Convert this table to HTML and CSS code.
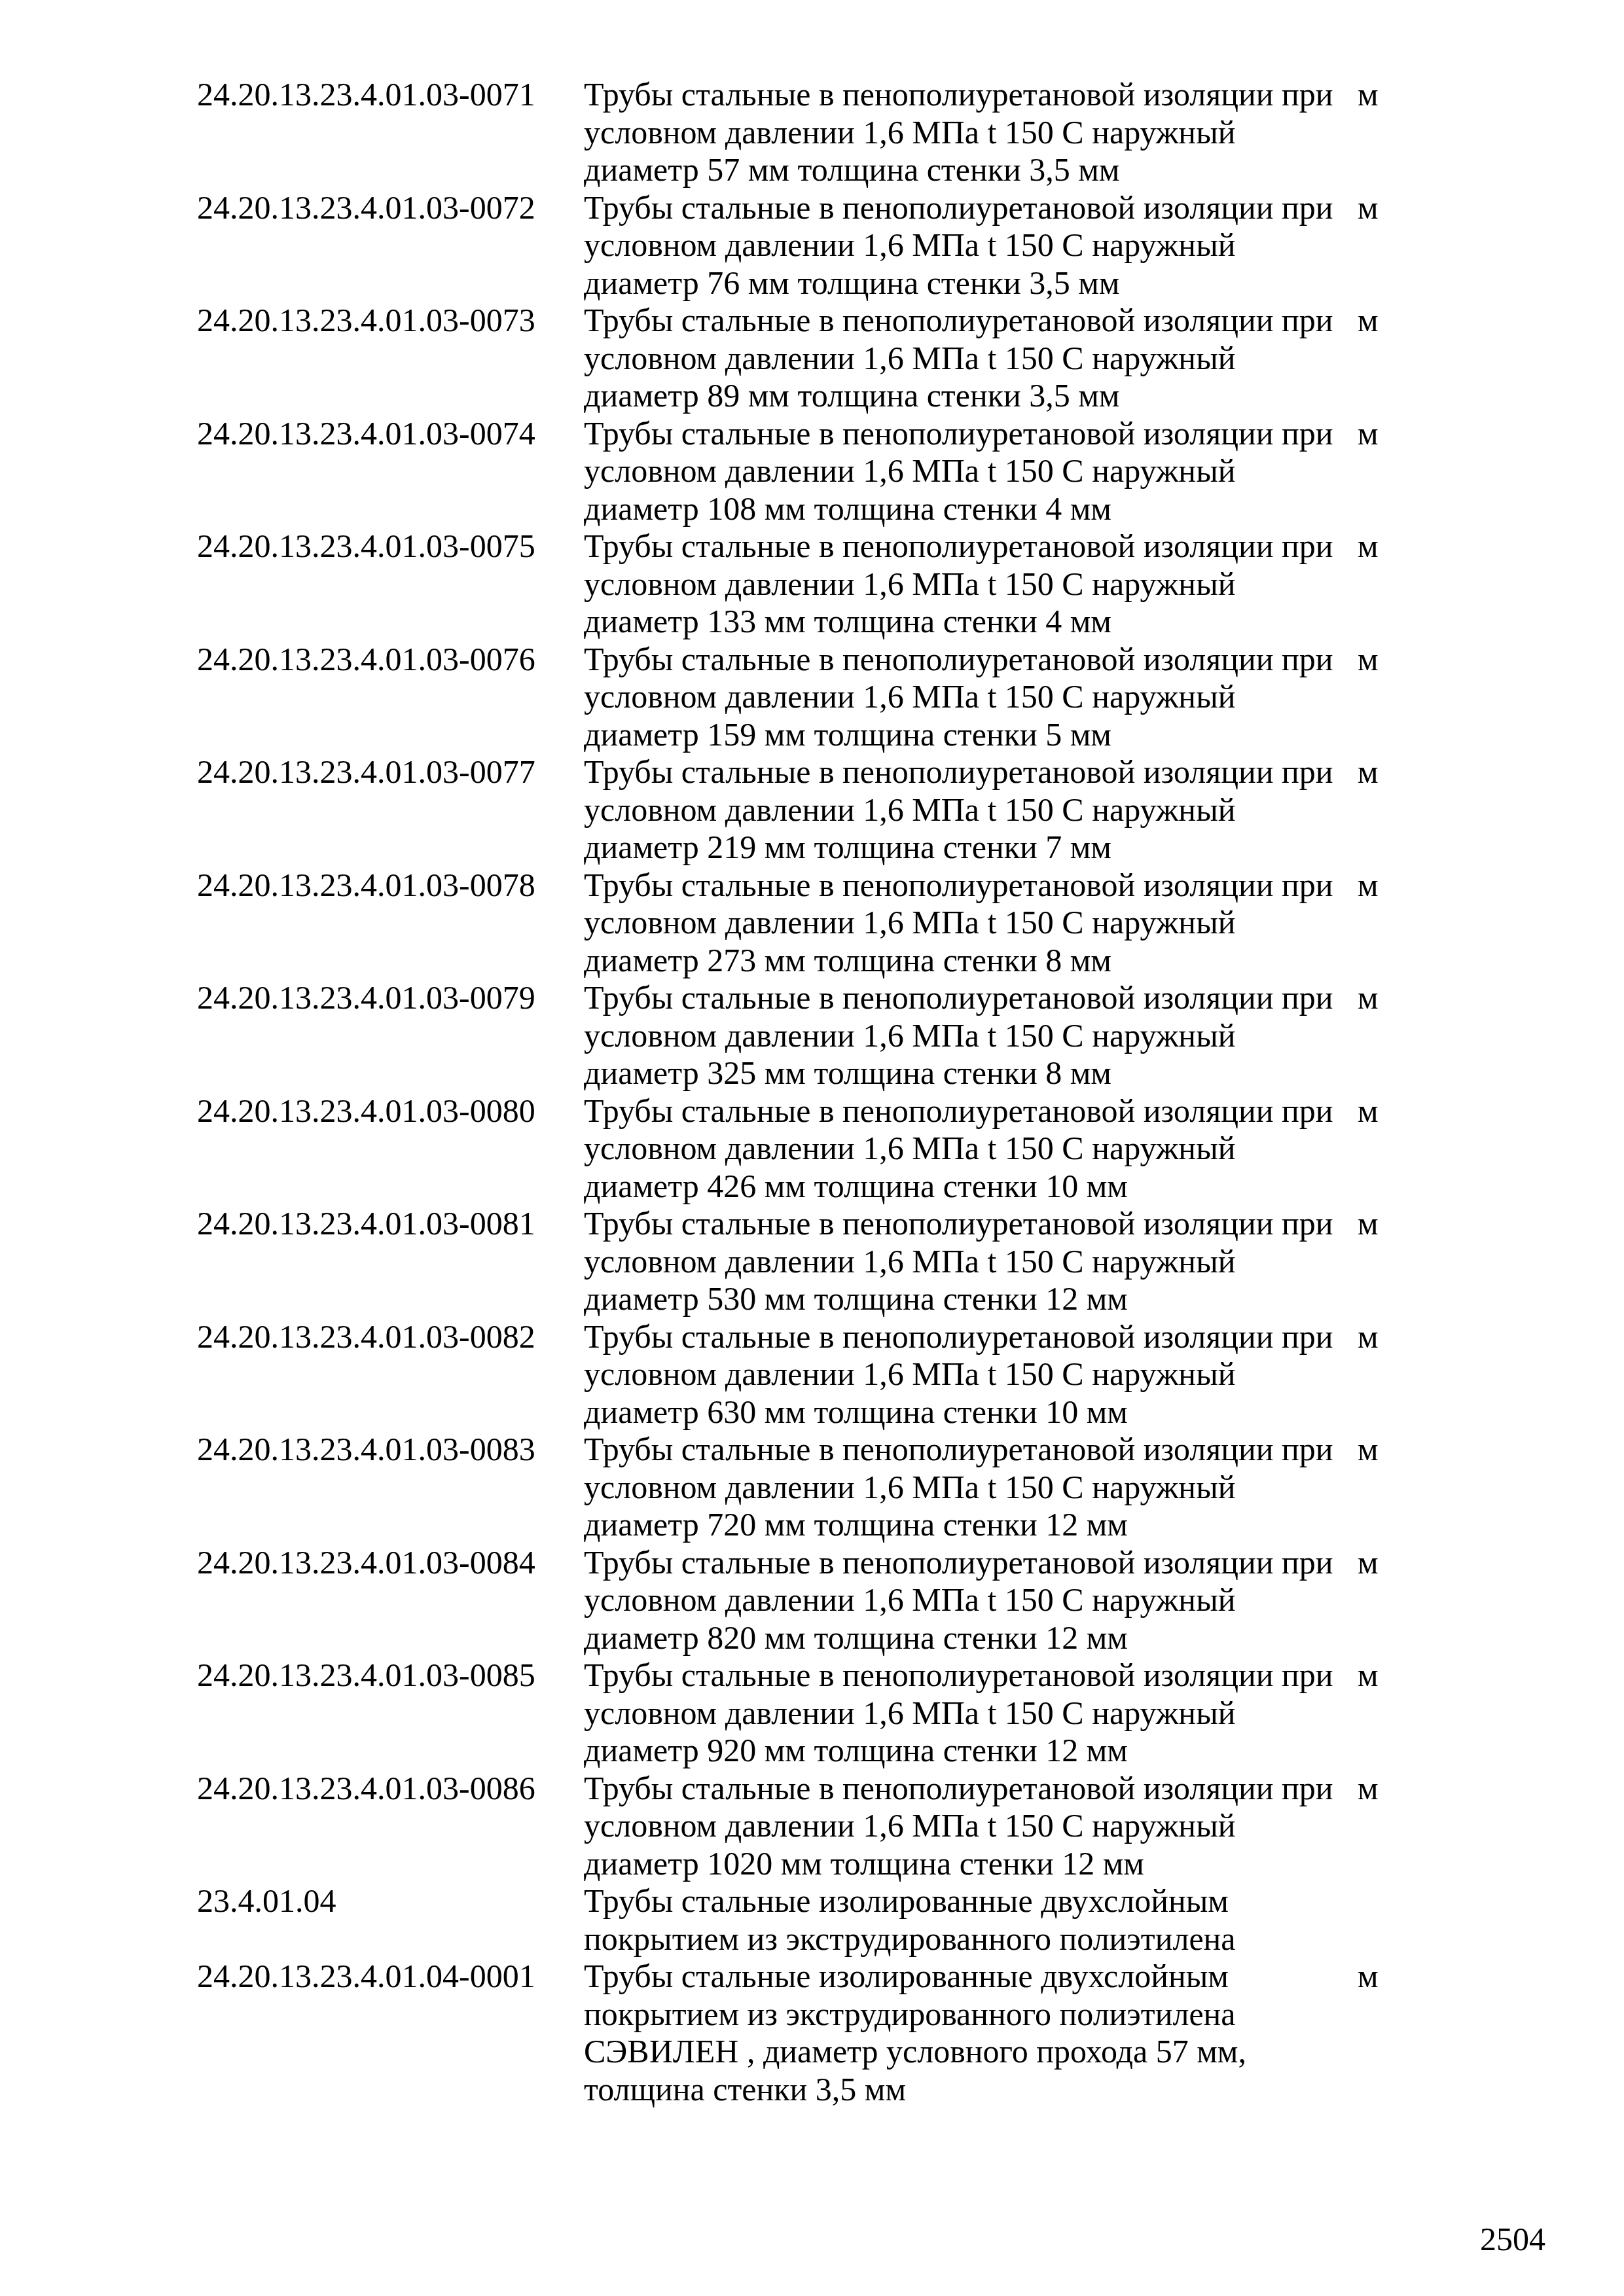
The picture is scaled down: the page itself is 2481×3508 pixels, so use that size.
FILE: index.html
```html
<!DOCTYPE html>
<html lang="ru">
<head>
<meta charset="utf-8">
<title>2504</title>
<link rel="stylesheet" href="styles.css">
</head>
<body>
<div class="page">
  <div class="list">
    <div class="code">24.20.13.23.4.01.03-0071</div><div class="desc">Трубы стальные в пенополиуретановой изоляции при<br>условном давлении 1,6 МПа t 150 С наружный<br>диаметр 57 мм толщина стенки 3,5 мм</div><div class="unit">м</div>
    <div class="code">24.20.13.23.4.01.03-0072</div><div class="desc">Трубы стальные в пенополиуретановой изоляции при<br>условном давлении 1,6 МПа t 150 С наружный<br>диаметр 76 мм толщина стенки 3,5 мм</div><div class="unit">м</div>
    <div class="code">24.20.13.23.4.01.03-0073</div><div class="desc">Трубы стальные в пенополиуретановой изоляции при<br>условном давлении 1,6 МПа t 150 С наружный<br>диаметр 89 мм толщина стенки 3,5 мм</div><div class="unit">м</div>
    <div class="code">24.20.13.23.4.01.03-0074</div><div class="desc">Трубы стальные в пенополиуретановой изоляции при<br>условном давлении 1,6 МПа t 150 С наружный<br>диаметр 108 мм толщина стенки 4 мм</div><div class="unit">м</div>
    <div class="code">24.20.13.23.4.01.03-0075</div><div class="desc">Трубы стальные в пенополиуретановой изоляции при<br>условном давлении 1,6 МПа t 150 С наружный<br>диаметр 133 мм толщина стенки 4 мм</div><div class="unit">м</div>
    <div class="code">24.20.13.23.4.01.03-0076</div><div class="desc">Трубы стальные в пенополиуретановой изоляции при<br>условном давлении 1,6 МПа t 150 С наружный<br>диаметр 159 мм толщина стенки 5 мм</div><div class="unit">м</div>
    <div class="code">24.20.13.23.4.01.03-0077</div><div class="desc">Трубы стальные в пенополиуретановой изоляции при<br>условном давлении 1,6 МПа t 150 С наружный<br>диаметр 219 мм толщина стенки 7 мм</div><div class="unit">м</div>
    <div class="code">24.20.13.23.4.01.03-0078</div><div class="desc">Трубы стальные в пенополиуретановой изоляции при<br>условном давлении 1,6 МПа t 150 С наружный<br>диаметр 273 мм толщина стенки 8 мм</div><div class="unit">м</div>
    <div class="code">24.20.13.23.4.01.03-0079</div><div class="desc">Трубы стальные в пенополиуретановой изоляции при<br>условном давлении 1,6 МПа t 150 С наружный<br>диаметр 325 мм толщина стенки 8 мм</div><div class="unit">м</div>
    <div class="code">24.20.13.23.4.01.03-0080</div><div class="desc">Трубы стальные в пенополиуретановой изоляции при<br>условном давлении 1,6 МПа t 150 С наружный<br>диаметр 426 мм толщина стенки 10 мм</div><div class="unit">м</div>
    <div class="code">24.20.13.23.4.01.03-0081</div><div class="desc">Трубы стальные в пенополиуретановой изоляции при<br>условном давлении 1,6 МПа t 150 С наружный<br>диаметр 530 мм толщина стенки 12 мм</div><div class="unit">м</div>
    <div class="code">24.20.13.23.4.01.03-0082</div><div class="desc">Трубы стальные в пенополиуретановой изоляции при<br>условном давлении 1,6 МПа t 150 С наружный<br>диаметр 630 мм толщина стенки 10 мм</div><div class="unit">м</div>
    <div class="code">24.20.13.23.4.01.03-0083</div><div class="desc">Трубы стальные в пенополиуретановой изоляции при<br>условном давлении 1,6 МПа t 150 С наружный<br>диаметр 720 мм толщина стенки 12 мм</div><div class="unit">м</div>
    <div class="code">24.20.13.23.4.01.03-0084</div><div class="desc">Трубы стальные в пенополиуретановой изоляции при<br>условном давлении 1,6 МПа t 150 С наружный<br>диаметр 820 мм толщина стенки 12 мм</div><div class="unit">м</div>
    <div class="code">24.20.13.23.4.01.03-0085</div><div class="desc">Трубы стальные в пенополиуретановой изоляции при<br>условном давлении 1,6 МПа t 150 С наружный<br>диаметр 920 мм толщина стенки 12 мм</div><div class="unit">м</div>
    <div class="code">24.20.13.23.4.01.03-0086</div><div class="desc">Трубы стальные в пенополиуретановой изоляции при<br>условном давлении 1,6 МПа t 150 С наружный<br>диаметр 1020 мм толщина стенки 12 мм</div><div class="unit">м</div>
    <div class="code">23.4.01.04</div><div class="desc">Трубы стальные изолированные двухслойным<br>покрытием из экструдированного полиэтилена</div><div class="unit"></div>
    <div class="code">24.20.13.23.4.01.04-0001</div><div class="desc">Трубы стальные изолированные двухслойным<br>покрытием из экструдированного полиэтилена<br>СЭВИЛЕН , диаметр условного прохода 57 мм,<br>толщина стенки 3,5 мм</div><div class="unit">м</div>
  </div>
  <div class="page-number">2504</div>
</div>
</body>
</html>
```

FILE: styles.css
```css
html, body {
  margin: 0;
  padding: 0;
  background: #ffffff;
}

body {
  width: 2481px;
  min-height: 3508px;
  color: #000000;
  font-family: "Liberation Serif", "Times New Roman", serif;
  font-size: 50px;
  line-height: 57.5px;
}

.page {
  display: flex;
  flex-direction: column;
  padding: 116px 120px 0 301px;
}

.list {
  display: grid;
  grid-template-columns: 591px 1182px auto;
}

.code,
.desc,
.unit {
  white-space: nowrap;
}

.page-number {
  margin-top: 172px;
  text-align: right;
}
```
